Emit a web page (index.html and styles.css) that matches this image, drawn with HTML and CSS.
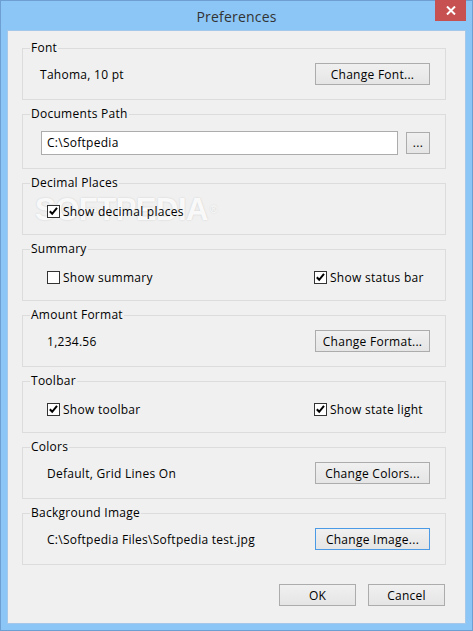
FILE: index.html
```html
<!DOCTYPE html>
<html>
<head>
<meta charset="utf-8">
<title>Preferences</title>
<link rel="stylesheet" href="styles.css">
</head>
<body>
<div class="window">
  <div class="titlebar">
    <span class="title">Preferences</span>
    <div class="close">
      <svg width="10" height="9" viewBox="0 0 10 9"><path d="M1 0.5 L9 8.5 M9 0.5 L1 8.5" stroke="#fff" stroke-width="2" fill="none"/></svg>
    </div>
  </div>
  <div class="client">
    <fieldset class="group">
      <legend>Font</legend>
      <div class="row row-font">
        <span>Tahoma, 10 pt</span>
        <button class="btn btn-wide">Change Font...</button>
      </div>
    </fieldset>
    <fieldset class="group">
      <legend>Documents Path</legend>
      <div class="row-path">
        <div class="textbox">C:\Softpedia</div>
        <button class="btn btn-dots">...</button>
      </div>
    </fieldset>
    <fieldset class="group">
      <legend>Decimal Places</legend>
      <div class="row-checks">
        <label class="check"><span class="box checked"><svg width="11" height="11" viewBox="0 0 11 11"><path d="M1.8 5.2 L4.2 7.8 L9 1.8" stroke="#000" stroke-width="2" fill="none"/></svg></span>Show decimal places</label>
      </div>
    </fieldset>
    <fieldset class="group">
      <legend>Summary</legend>
      <div class="row-checks">
        <label class="check"><span class="box"></span>Show summary</label>
        <label class="check"><span class="box checked"><svg width="11" height="11" viewBox="0 0 11 11"><path d="M1.8 5.2 L4.2 7.8 L9 1.8" stroke="#000" stroke-width="2" fill="none"/></svg></span>Show status bar</label>
      </div>
    </fieldset>
    <fieldset class="group">
      <legend>Amount Format</legend>
      <div class="row">
        <span>1,234.56</span>
        <button class="btn btn-wide">Change Format...</button>
      </div>
    </fieldset>
    <fieldset class="group">
      <legend>Toolbar</legend>
      <div class="row-checks">
        <label class="check"><span class="box checked"><svg width="11" height="11" viewBox="0 0 11 11"><path d="M1.8 5.2 L4.2 7.8 L9 1.8" stroke="#000" stroke-width="2" fill="none"/></svg></span>Show toolbar</label>
        <label class="check"><span class="box checked"><svg width="11" height="11" viewBox="0 0 11 11"><path d="M1.8 5.2 L4.2 7.8 L9 1.8" stroke="#000" stroke-width="2" fill="none"/></svg></span>Show state light</label>
      </div>
    </fieldset>
    <fieldset class="group">
      <legend>Colors</legend>
      <div class="row">
        <span>Default, Grid Lines On</span>
        <button class="btn btn-wide">Change Colors...</button>
      </div>
    </fieldset>
    <fieldset class="group">
      <legend>Background Image</legend>
      <div class="row">
        <span>C:\Softpedia Files\Softpedia test.jpg</span>
        <button class="btn btn-wide btn-focus">Change Image...</button>
      </div>
    </fieldset>
    <div class="actions">
      <button class="btn btn-action">OK</button>
      <button class="btn btn-action">Cancel</button>
    </div>
  </div>
  <div class="watermark">SOFTPEDIA<span class="reg">®</span></div>
</div>
</body>
</html>
```

FILE: styles.css
```css
* { box-sizing: border-box; }

html, body {
  margin: 0;
  padding: 0;
  background: #8bc6f7;
}

.window {
  position: relative;
  width: 473px;
  height: 631px;
  border: 1px solid #6e9fd2;
  background: #8bc6f7;
  padding: 0 6px 6px 6px;
  font-family: "Segoe UI", "Open Sans", "Noto Sans", sans-serif;
  font-size: 12px;
  letter-spacing: 0.27px;
  color: #000;
}

.titlebar {
  position: relative;
  height: 29px;
  display: flex;
  align-items: center;
  justify-content: center;
}

.title {
  font-size: 14px;
  letter-spacing: 0.2px;
  color: #333;
  margin-top: 1px;
}

.close {
  position: absolute;
  top: -1px;
  right: 0px;
  width: 31px;
  height: 21px;
  background: #c75050;
  display: flex;
  align-items: center;
  justify-content: center;
}

.client {
  height: 594px;
  border: 1px solid #a3c8ea;
  background: #f0f0f0;
  padding: 9px 19px 0 14px;
  display: flex;
  flex-direction: column;
  gap: 6px;
}

.group {
  margin: 0;
  padding: 0;
  border: 1px solid #dcdcdc;
  min-inline-size: 0;
}

.group legend {
  margin-left: 7px;
  padding: 0 1px;
  line-height: 16px;
  font-size: 12px;
}

.row {
  display: flex;
  align-items: center;
  justify-content: space-between;
  height: 43px;
  padding: 7px 15px 14px 24px;
}

.row-font {
  padding-left: 17px;
}

.row-path {
  display: flex;
  align-items: center;
  gap: 8px;
  padding: 9px 15px 13px 18px;
}

.textbox {
  flex: 1;
  height: 24px;
  border: 1px solid #acacac;
  background: #fff;
  padding: 0 0 0 5px;
  line-height: 22px;
}

.row-checks {
  display: grid;
  grid-template-columns: 267px 1fr;
  align-items: center;
  height: 43px;
  padding: 9px 0 12px 24px;
}

.check {
  position: relative;
  z-index: 1;
  display: flex;
  align-items: center;
  gap: 3px;
  justify-self: start;
}

.box {
  width: 13px;
  height: 13px;
  border: 1px solid #333;
  background: #fff;
  display: flex;
  align-items: center;
  justify-content: center;
}

.btn {
  margin: 0;
  padding: 0;
  height: 22px;
  border: 1px solid #acacac;
  background: linear-gradient(#f0f0f0, #e5e5e5);
  font-family: inherit;
  font-size: 12px;
  letter-spacing: 0.27px;
  color: #000;
}

.btn-wide { width: 115px; }

.btn-dots {
  width: 24px;
  line-height: 14px;
}

.btn-focus {
  border-color: #4a9ae6;
}

.actions {
  display: flex;
  justify-content: flex-end;
  gap: 12px;
  margin-top: 13px;
  margin-right: 1px;
}

.btn-action { width: 77px; }

.watermark {
  position: absolute;
  z-index: 0;
  left: 34px;
  top: 193px;
  font-family: "Liberation Sans", Arial, sans-serif;
  font-weight: bold;
  font-size: 31px;
  line-height: 32px;
  letter-spacing: -0.5px;
  color: rgba(255, 255, 255, 0.9);
  text-shadow: 0 0 2px rgba(0, 0, 0, 0.15);
  pointer-events: none;
}

.watermark .reg {
  font-size: 10px;
  vertical-align: top;
  font-weight: normal;
  margin-left: 2px;
}
```
